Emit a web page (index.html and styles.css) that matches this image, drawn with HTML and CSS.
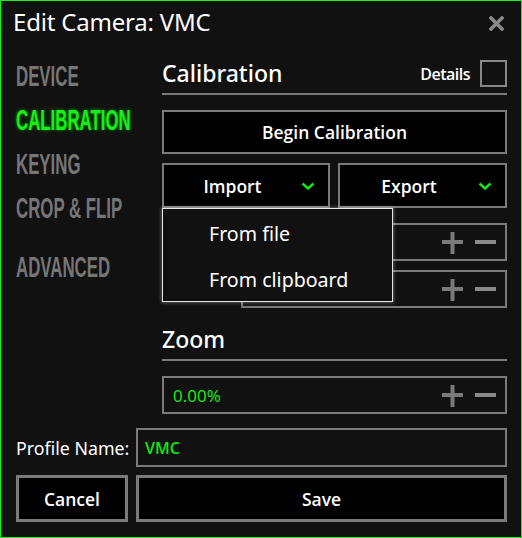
FILE: index.html
```html
<!DOCTYPE html>
<html>
<head>
<meta charset="utf-8">
<link rel="stylesheet" href="styles.css">
</head>
<body>
<div class="window">
  <header class="titlebar">
    <h1 class="title">Edit Camera: VMC</h1>
    <button class="close" aria-label="Close">
      <svg width="15" height="15" viewBox="0 0 15 15"><path d="M2 2 L13 13 M13 2 L2 13" stroke="#8a8a8a" stroke-width="3.6" stroke-linecap="square"/></svg>
    </button>
  </header>

  <div class="main">
    <nav class="nav">
      <div class="nav-item"><span>DEVICE</span></div>
      <div class="nav-item active"><span>CALIBRATION</span></div>
      <div class="nav-item"><span>KEYING</span></div>
      <div class="nav-item"><span>CROP &amp; FLIP</span></div>
      <div class="nav-item gap"><span>ADVANCED</span></div>
    </nav>

    <section class="content">
      <div class="section-head">
        <h2 class="section-title">Calibration</h2>
        <label class="details">Details <span class="checkbox"></span></label>
      </div>

      <button class="btn btn-wide">Begin Calibration</button>

      <div class="split">
        <div class="dropdown-wrap">
          <button class="btn btn-drop"><span class="drop-label">Import</span>
            <svg class="chev" width="14" height="8" viewBox="0 0 14 8"><path d="M1.5 1.5 L7 6.5 L12.5 1.5" fill="none" stroke="#17e617" stroke-width="2.4"/></svg>
          </button>
          <div class="menu">
            <div class="menu-item">From file</div>
            <div class="menu-item">From clipboard</div>
          </div>
        </div>
        <button class="btn btn-drop"><span class="drop-label">Export</span>
          <svg class="chev" width="14" height="8" viewBox="0 0 14 8"><path d="M1.5 1.5 L7 6.5 L12.5 1.5" fill="none" stroke="#17e617" stroke-width="2.4"/></svg>
        </button>
      </div>

      <div class="field-row first">
        <span class="field-label"></span>
        <div class="field">
          <span class="field-value"></span>
          <svg class="pm" width="56" height="22" viewBox="0 0 56 22"><path d="M0 10 H21 M10.5 0 V22" stroke="#7a7a7a" stroke-width="4"/><path d="M33 10 H54" stroke="#8a8a8a" stroke-width="4"/></svg>
        </div>
      </div>
      <div class="field-row">
        <span class="field-label"></span>
        <div class="field">
          <span class="field-value"></span>
          <svg class="pm" width="56" height="22" viewBox="0 0 56 22"><path d="M0 10 H21 M10.5 0 V22" stroke="#7a7a7a" stroke-width="4"/><path d="M33 10 H54" stroke="#8a8a8a" stroke-width="4"/></svg>
        </div>
      </div>

      <div class="section-head zoom-head">
        <h2 class="section-title">Zoom</h2>
      </div>

      <div class="field full">
        <span class="field-value green">0.00%</span>
        <svg class="pm" width="56" height="22" viewBox="0 0 56 22"><path d="M0 10 H21 M10.5 0 V22" stroke="#7a7a7a" stroke-width="4"/><path d="M33 10 H54" stroke="#8a8a8a" stroke-width="4"/></svg>
      </div>
    </section>
  </div>

  <footer class="footer">
    <span class="profile-label">Profile Name:</span>
    <div class="profile-input">VMC</div>
    <button class="btn btn-foot">Cancel</button>
    <button class="btn btn-foot">Save</button>
  </footer>
</div>
</body>
</html>
```

FILE: styles.css
```css
* { box-sizing: border-box; margin: 0; padding: 0; }

html, body {
  background: #111111;
}

body {
  width: 522px;
  height: 538px;
  font-family: "Noto Sans", "Open Sans", sans-serif;
  color: #ffffff;
}

.window {
  width: 522px;
  height: 538px;
  border: 1px solid #13f213;
  background: #111111;
  padding: 0 14px 0 15px;
  display: flex;
  flex-direction: column;
}

.titlebar {
  height: 59px;
  display: flex;
  justify-content: space-between;
  align-items: flex-start;
  padding-top: 5px;
  margin-left: -3px;
}

.title {
  font-size: 24px;
  font-weight: 400;
  line-height: 32px;
  letter-spacing: -0.2px;
}

.close {
  background: none;
  border: none;
  margin-top: 10px;
  margin-right: 3px;
  width: 15px;
  height: 15px;
  display: flex;
}

.main {
  display: grid;
  grid-template-columns: 146px 1fr;
}

.nav {
  display: flex;
  flex-direction: column;
  margin-top: -2px;
}

.nav-item {
  height: 44px;
  font-family: "Liberation Sans", sans-serif;
  font-weight: 700;
  font-size: 29px;
  line-height: 36px;
  color: #767676;
  white-space: nowrap;
}

.nav-item span {
  display: inline-block;
  transform: scaleX(0.58);
  transform-origin: left center;
}

.nav-item.active {
  color: #17f017;
  text-shadow: 0 0 5px rgba(0, 255, 0, 0.6);
}

.nav-item.gap {
  margin-top: 15px;
}

.content {
  display: flex;
  flex-direction: column;
}

.section-head {
  display: flex;
  justify-content: space-between;
  align-items: flex-end;
  height: 35px;
  padding-bottom: 6px;
  border-bottom: 2px solid #7a7a7a;
}

.section-title {
  font-size: 23px;
  font-weight: 500;
  line-height: 27px;
}

.details {
  display: flex;
  align-items: center;
  gap: 10px;
  font-family: "Open Sans", "Noto Sans", sans-serif;
  font-size: 16px;
  font-weight: 600;
  letter-spacing: -0.5px;
}

.checkbox {
  width: 27px;
  height: 27px;
  border: 2px solid #888888;
}

.btn {
  font-family: "Open Sans", "Noto Sans", sans-serif;
  background: #000000;
  color: #ffffff;
  border: 2px solid #7a7a7a;
  font-size: 17.5px;
  font-weight: 600;
}

.btn-wide {
  margin-top: 15px;
  height: 44px;
}

.split {
  margin-top: 9px;
  display: grid;
  grid-template-columns: 168px 1fr;
  gap: 8px;
}

.dropdown-wrap {
  position: relative;
}

.btn-drop {
  width: 100%;
  height: 45px;
  display: flex;
  align-items: center;
  padding-right: 13px;
}

.drop-label {
  flex: 1;
  text-align: center;
}

.menu {
  position: absolute;
  left: 0;
  top: 45px;
  width: 231px;
  height: 94px;
  background: #111111;
  border: 1px solid #e6e6e6;
  box-shadow: 0 0 3px 1px rgba(220, 220, 220, 0.35);
  z-index: 2;
  padding-top: 2px;
}

.menu-item {
  height: 46px;
  line-height: 46px;
  padding-left: 46px;
  font-size: 19.6px;
}

.field-row {
  display: grid;
  grid-template-columns: 79px 1fr;
  margin-top: 9px;
}

.field-row.first {
  margin-top: 15px;
}

.field {
  height: 38px;
  border: 2px solid #7a7a7a;
  display: flex;
  align-items: center;
  justify-content: space-between;
  padding: 0 7px 0 9px;
}

.field.full {
  margin-top: 15px;
}

.pm {
  margin-top: 2px;
}

.zoom-head {
  margin-top: 18px;
}

.field-value {
  font-size: 17px;
}

.green {
  color: #17e617;
}

.footer {
  margin-top: 14px;
  display: grid;
  grid-template-columns: 112px 1fr;
  grid-template-rows: 39px 47px;
  column-gap: 8px;
  row-gap: 8px;
}

.profile-label {
  align-self: center;
  font-size: 17.8px;
  white-space: nowrap;
}

.profile-input {
  border: 2px solid #7a7a7a;
  color: #17e617;
  font-family: "Open Sans", "Noto Sans", sans-serif;
  font-size: 16px;
  font-weight: 600;
  padding-left: 7px;
  display: flex;
  align-items: center;
}

.btn-foot {
  border-width: 3px;
}
```
